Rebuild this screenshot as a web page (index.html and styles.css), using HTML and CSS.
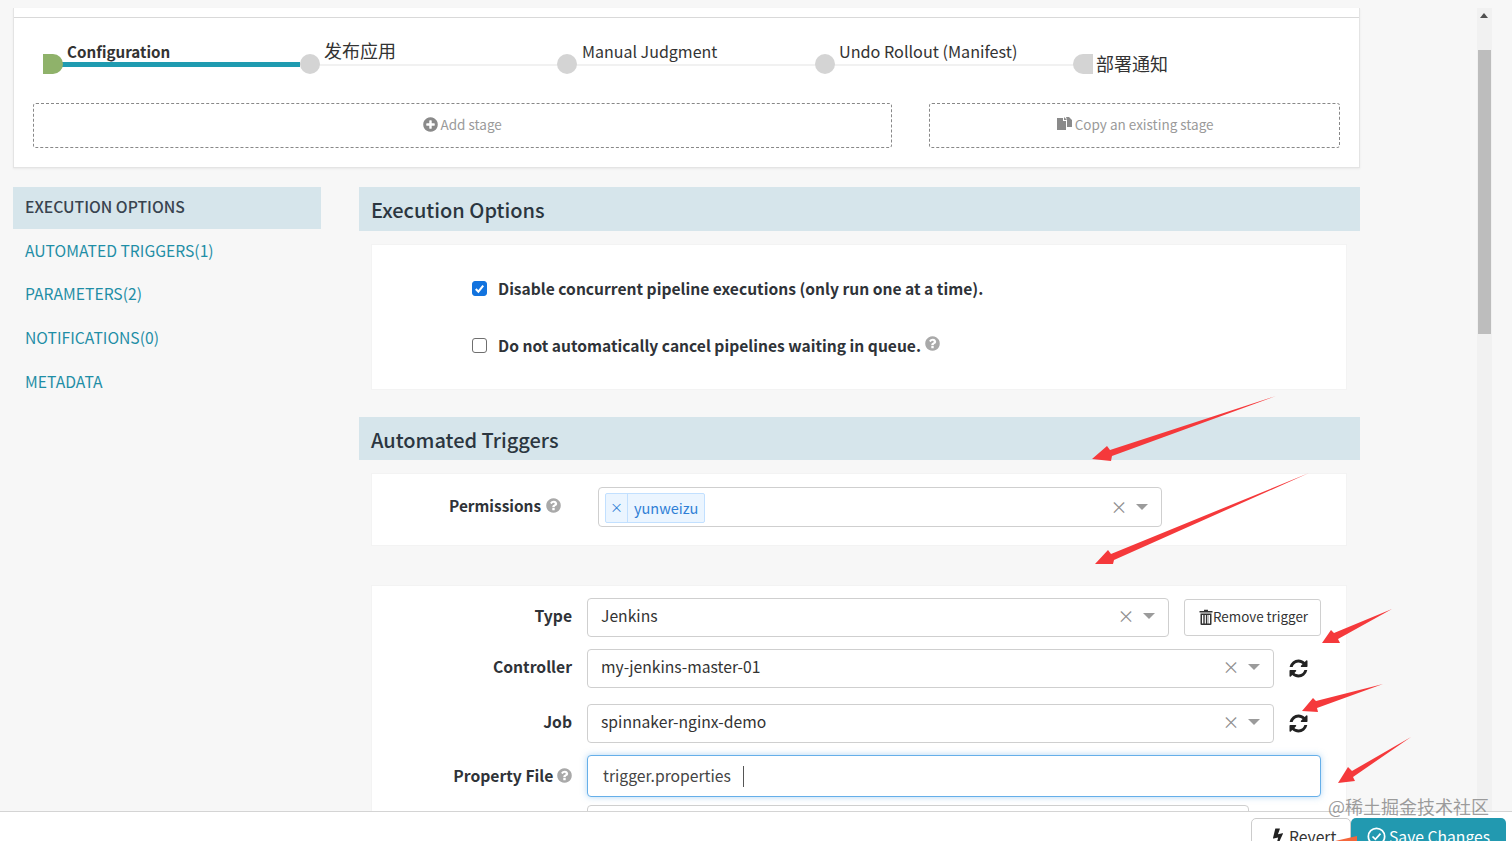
FILE: index.html
```html
<!DOCTYPE html>
<html lang="en">
<head>
<meta charset="utf-8">
<title>Pipeline configuration</title>
<link rel="stylesheet" href="styles.css">
</head>
<body>
<svg class="defs" width="0" height="0" aria-hidden="true">
  <symbol id="i-help" viewBox="0 0 1792 1792"><path d="M1024 1376v-192q0-14-9-23t-23-9h-192q-14 0-23 9t-9 23v192q0 14 9 23t23 9h192q14 0 23-9t9-23zm256-672q0-88-55.5-163t-138.5-116-170-41q-243 0-371 213-15 24 8 42l132 100q7 6 19 6 16 0 25-12 53-68 86-92 34-24 86-24 48 0 85.5 26t37.5 59q0 38-20 61t-68 45q-63 28-115.5 86.5t-52.5 125.5v36q0 14 9 23t23 9h192q14 0 23-9t9-23q0-19 21.5-49.5t54.5-49.5q32-18 49-28.5t46-35 44.5-48 28-60.5 12.5-81zm384 192q0 209-103 385.5t-279.5 279.5-385.5 103-385.5-103-279.5-279.5-103-385.5 103-385.5 279.5-279.5 385.5-103 385.5 103 279.5 279.5 103 385.5z"/></symbol>
  <symbol id="i-plus" viewBox="0 0 1792 1792"><path d="M1344 960v-128q0-26-19-45t-45-19h-256v-256q0-26-19-45t-45-19h-128q-26 0-45 19t-19 45v256h-256q-26 0-45 19t-19 45v128q0 26 19 45t45 19h256v256q0 26 19 45t45 19h128q26 0 45-19t19-45v-256h256q26 0 45-19t19-45zm320-64q0 209-103 385.5t-279.5 279.5-385.5 103-385.5-103-279.5-279.5-103-385.5 103-385.5 279.5-279.5 385.5-103 385.5 103 279.5 279.5 103 385.5z"/></symbol>
  <symbol id="i-refresh" viewBox="0 0 1792 1792"><path d="M1639 1056q0 5-1 7-64 268-268 434.5t-478 166.5q-146 0-282.5-55t-243.5-157l-129 129q-19 19-45 19t-45-19-19-45v-448q0-26 19-45t45-19h448q26 0 45 19t19 45-19 45l-137 137q71 66 161 102t187 36q134 0 250-65t186-179q11-17 53-117 8-23 30-23h192q13 0 22.5 9.5t9.5 22.5zm25-800v448q0 26-19 45t-45 19h-448q-26 0-45-19t-19-45 19-45l138-138q-148-137-349-137-134 0-250 65t-186 179q-11 17-53 117-8 23-30 23h-199q-13 0-22.5-9.5t-9.5-22.5v-7q65-268 270-434.5t480-166.5q146 0 284 55.5t245 156.5l130-129q19-19 45-19t45 19 19 45z"/></symbol>
  <symbol id="i-bolt" viewBox="0 0 1792 1792"><path d="M1333 566q18 20 7 44l-540 1157q-13 25-42 25-4 0-14-2-17-5-25.5-19t-4.5-30l197-808-406 101q-4 1-12 1-18 0-31-11-18-15-13-39l201-825q4-14 16-23t28-9h328q19 0 32 12.5t13 29.5q0 8-5 18l-171 463 396-98q8-2 12-2 19 0 34 15z"/></symbol>
</svg>

<div class="page">
  <section class="stages-card">
    <div class="stages-head"></div>
    <div class="graph">
      <span class="edge edge-active"></span>
      <span class="edge edge-rest"></span>
      <span class="node node-first"></span>
      <span class="node node-2"></span>
      <span class="node node-3"></span>
      <span class="node node-4"></span>
      <span class="node node-last"></span>
      <span class="stage-label label-1">Configuration</span>
      <span class="stage-label label-2">发布应用</span>
      <span class="stage-label label-3">Manual Judgment</span>
      <span class="stage-label label-4">Undo Rollout (Manifest)</span>
      <span class="stage-label label-5">部署通知</span>
    </div>
    <div class="stage-actions">
      <div class="dashed dashed-add">
        <svg class="ic-add"><use href="#i-plus"/></svg>
        <span>Add stage</span>
      </div>
      <div class="dashed dashed-copy">
        <svg class="ic-copy" viewBox="0 0 16 16"><path d="M0 2h6l0 3 3 0v9H0z"/><path d="M7 1l3 3H7z"/><path d="M9 1h3l3 3v7h-5V4z"/></svg>
        <span>Copy an existing stage</span>
      </div>
    </div>
  </section>

  <div class="columns">
    <nav class="side">
      <div class="side-item side-active">EXECUTION OPTIONS</div>
      <div class="side-item">AUTOMATED TRIGGERS(1)</div>
      <div class="side-item">PARAMETERS(2)</div>
      <div class="side-item">NOTIFICATIONS(0)</div>
      <div class="side-item">METADATA</div>
    </nav>

    <main class="content">
      <h2 class="sec-title">Execution Options</h2>
      <div class="panel panel-exec">
        <label class="check-row">
          <span class="box box-on"><svg viewBox="0 0 14 14"><path d="M3 7.5l2.8 3L11 4" fill="none" stroke="#fff" stroke-width="2.2"/></svg></span>
          <span>Disable concurrent pipeline executions (only run one at a time).</span>
        </label>
        <label class="check-row">
          <span class="box"></span>
          <span>Do not automatically cancel pipelines waiting in queue.</span>
          <svg class="ic-help ic-help-q"><use href="#i-help"/></svg>
        </label>
      </div>

      <h2 class="sec-title sec-title-2">Automated Triggers</h2>
      <div class="panel panel-perm">
        <div class="perm-label">Permissions <svg class="ic-help"><use href="#i-help"/></svg></div>
        <div class="select select-perm">
          <span class="tag"><span class="tag-x">×</span><span class="tag-val">yunweizu</span></span>
          <span class="sel-tools"><span class="sel-x">×</span><span class="caret"></span></span>
        </div>
      </div>

      <div class="panel panel-trigger">
        <div class="frow frow-type">
          <div class="flabel">Type</div>
          <div class="select select-type"><span>Jenkins</span><span class="sel-tools"><span class="sel-x">×</span><span class="caret"></span></span></div>
          <button class="btn-remove" type="button">
            <svg class="ic-trash" viewBox="0 0 14 16"><path d="M5 2V.7h4V2h4.5v1.6H.5V2zM1.5 4.4h11V15a1 1 0 0 1-1 1h-9a1 1 0 0 1-1-1zM3 6v8.5h1.3V6zm2.7 0v8.5h1.2V6zm2.6 0v8.5h1.2V6zM11 6H9.8v8.5H11z" fill-rule="evenodd"/></svg>Remove trigger
          </button>
        </div>
        <div class="frow frow-ctrl">
          <div class="flabel">Controller</div>
          <div class="select select-wide"><span>my-jenkins-master-01</span><span class="sel-tools"><span class="sel-x">×</span><span class="caret"></span></span></div>
          <svg class="ic-refresh"><use href="#i-refresh"/></svg>
        </div>
        <div class="frow frow-job">
          <div class="flabel">Job</div>
          <div class="select select-wide"><span>spinnaker-nginx-demo</span><span class="sel-tools"><span class="sel-x">×</span><span class="caret"></span></span></div>
          <svg class="ic-refresh"><use href="#i-refresh"/></svg>
        </div>
        <div class="frow frow-prop">
          <div class="flabel">Property File <svg class="ic-help"><use href="#i-help"/></svg></div>
          <div class="input-focus"><span>trigger.properties</span><span class="cursor"></span></div>
        </div>
        <div class="frow frow-next">
          <div class="flabel"></div>
          <div class="select select-next"></div>
        </div>
      </div>
    </main>
  </div>
</div>

<div class="scrollbar"><span class="sb-up"></span><span class="sb-thumb"></span></div>

<footer class="footer">
  <button class="btn-revert" type="button"><svg class="ic-bolt"><use href="#i-bolt"/></svg>Revert</button>
  <button class="btn-save" type="button"><svg class="ic-check" viewBox="0 0 20 20"><circle cx="10" cy="10" r="8.6" fill="none" stroke="#fff" stroke-width="1.8"/><path d="M5.8 10l3 3 5.4-6" fill="none" stroke="#fff" stroke-width="1.8"/></svg>Save Changes</button>
</footer>

<svg class="arrows" viewBox="0 0 1512 841" aria-hidden="true">
  <polygon points="1276,396 1110,450 1107,446 1092,459 1111,461 1112,456"/>
  <polygon points="1309,473 1111,554 1108,550 1095,564 1113,564 1114,560"/>
  <polygon points="1392,609 1334,633 1331,630 1322,643 1340,643 1338,639"/>
  <polygon points="1383,684 1316,701 1313,698 1302,711 1318,712 1317,708"/>
  <polygon points="1411,737 1352,771 1348,767 1338,783 1355,781 1353,777"/>
  <polygon class="arrow-orange" points="1335,841 1357,836 1357,841"/>
</svg>
<div class="watermark">@稀土掘金技术社区</div>
</body>
</html>
```
FILE: styles.css
```css
* { box-sizing: border-box; }
html, body { margin: 0; height: 100%; overflow: hidden; }
body {
  background: #f7f7f7;
  color: #2b2f36;
  font-family: "Noto Sans CJK SC", "Noto Sans", sans-serif;
  font-size: 15.7px;
  line-height: 22px;
}
.defs { position: absolute; }
.page { width: 1360px; padding: 8px 0 0 13px; }

/* stage card */
.stages-card {
  height: 160px;
  background: #fff;
  border: 1px solid #e4e4e4;
  border-top: 0;
  box-shadow: 0 1px 2px rgba(0,0,0,.06);
}
.stages-head { height: 10px; border-bottom: 1px solid #d9d9d9; }
.graph { position: relative; height: 85px; }
.edge { position: absolute; height: 2px; top: 44px; background: #f1f1f1; }
.edge-active { left: 46px; width: 240px; height: 5px; top: 44px; background: #1f9bb0; z-index: 1; }
.edge-rest { left: 300px; width: 770px; top: 46px; }
.node { position: absolute; top: 36px; width: 20px; height: 20px; border-radius: 50%; background: #d4d4d4; z-index: 2; }
.node-first { left: 29px; background: #8fb26a; border-radius: 0 10px 10px 0; }
.node-2 { left: 286px; }
.node-3 { left: 543px; }
.node-4 { left: 801px; }
.node-last { left: 1059px; border-radius: 10px 0 0 10px; }
.stage-label { position: absolute; top: 22px; white-space: nowrap; color: #333; font-size: 16px; }
.label-1 { left: 53px; font-weight: 700; font-size: 15.2px; }
.label-2 { left: 310px; font-size: 18px; top: 21px; }
.label-3 { left: 568px; }
.label-4 { left: 825px; font-size: 16.2px; }
.label-5 { left: 1082px; top: 34px; font-size: 18px; }
.stage-actions { display: flex; gap: 37px; padding: 0 19px; }
.dashed {
  height: 45px;
  border: 1px dashed #888;
  border-radius: 3px;
  display: flex;
  align-items: center;
  justify-content: center;
  color: #9a9a9a;
  font-size: 13.5px;
}
.dashed-add { width: 860px; gap: 2px; padding: 0 2px 3px 0; }
.dashed-copy { width: 411px; gap: 2px; padding: 0 0 3px 1px; }
.ic-add { width: 17px; height: 17px; fill: #8a8a8a; }
.ic-copy { width: 16px; height: 16px; fill: #8a8a8a; }

/* columns */
.columns { display: flex; gap: 38px; margin-top: 19px; }
.side { width: 308px; flex: none; }
.side-item { height: 43.6px; padding: 0 12px 2px; display: flex; align-items: center; color: #1f8ea6; }
.side-active { height: 42px; background: #d6e5eb; color: #38434f; font-weight: 500; margin-bottom: 1px; }
.content { flex: 1; min-width: 0; }
.sec-title {
  margin: 0;
  height: 44px;
  padding: 2px 12px 0;
  display: flex;
  align-items: center;
  background: #d6e5eb;
  color: #2b3640;
  font-size: 20px;
  font-weight: 500;
}
.sec-title-2 { margin-top: 27px; height: 43px; }
.panel { margin: 13px 13px 0 12px; background: #fff; border: 1px solid #f3f3f3; }
.panel-exec { height: 146px; padding: 15px 0 0 100px; }
.check-row { display: flex; align-items: center; height: 57px; font-size: 15.6px; font-weight: 700; color: #2f3338; }
.check-row:first-child { height: 56px; }
.box { width: 15px; height: 15px; flex: none; margin: 1px 11px 0 0; border: 1px solid #6f6f6f; border-radius: 3px; background: #fff; display: block; }
.box-on { background: #1273de; border-color: #1273de; }
.box-on svg { display: block; width: 13px; height: 13px; }
.ic-help { width: 17px; height: 17px; fill: #a9a9a9; flex: none; vertical-align: -2px; }
.ic-help-q { margin: -2px 0 0 3px; }

.panel-perm { height: 73px; display: flex; align-items: center; padding: 0 0 0 77px; }
.perm-label { width: 149px; font-size: 15.4px; font-weight: 700; color: #2f3338; margin-top: -10px; }
.select {
  height: 39px;
  padding: 0 13px 3px;
  border: 1px solid #cfcfcf;
  border-radius: 4px;
  background: #fff;
  display: flex;
  align-items: center;
  color: #333;
}
.select-perm { width: 564px; height: 40px; padding: 0 13px 0 6px; margin-top: -6px; }
.tag { display: flex; height: 30px; margin-top: 2px; align-items: center; border: 1px solid #c2e0ff; border-radius: 2px; background: #ebf5ff; color: #2f7fd6; font-size: 14.5px; }
.tag-x { width: 22px; height: 100%; border-right: 1px solid #c2e0ff; display: flex; align-items: center; justify-content: center; font-size: 13px; padding-bottom: 2px; }
.tag-val { padding: 0 6px; }
.sel-tools { margin-left: auto; display: flex; align-items: center; gap: 8.5px; }
.sel-x { color: #8e8e8e; font-size: 17px; line-height: 20px; }
.caret { width: 0; height: 0; border: 6.5px solid transparent; border-top: 6.5px solid #9b9b9b; border-bottom: 0; }

.panel-trigger { margin-top: 39px; height: 300px; padding-top: 12px; }
.frow { display: flex; align-items: center; }
.flabel { width: 200px; flex: none; text-align: right; font-weight: 700; color: #2f3338; margin-right: 15px; margin-top: -4px; }
.frow-ctrl { margin-top: 12px; }
.frow-job { margin-top: 16px; }
.frow-prop { margin-top: 12px; }
.frow-prop .flabel { margin-top: 0; }
.frow-prop .ic-help { margin: 0 -1px 0 -1px; }
.frow-next { margin-top: 8px; }
.select-type { width: 582px; }
.select-wide { width: 687px; }
.select-next { width: 662px; }
.btn-remove {
  margin-left: 15px;
  width: 137px;
  height: 37px;
  padding: 0 0 4px 2px;
  border: 1px solid #d0d0d0;
  border-radius: 3px;
  background: #fff;
  font: inherit;
  font-size: 13.4px;
  color: #333;
  display: flex;
  align-items: center;
  justify-content: center;
}
.ic-trash { width: 14px; height: 16px; fill: #333; margin-top: 2px; }
.ic-refresh { width: 21px; height: 21px; fill: #222; margin-left: 14px; }
.input-focus {
  width: 734px;
  height: 42px;
  padding: 0 0 0 15px;
  border: 1px solid #66afe9;
  border-radius: 4px;
  box-shadow: 0 0 6px rgba(102,175,233,.5);
  background: #fff;
  display: flex;
  align-items: center;
  color: #444;
}
.cursor { width: 1.5px; height: 21px; background: #555; margin-left: 12px; }

/* chrome */
.scrollbar { position: absolute; left: 1477px; top: 8px; bottom: 0; width: 15px; background: #f1f1f1; }
.sb-up { position: absolute; left: 3px; top: 5px; border: 4px solid transparent; border-bottom: 5px solid #505050; border-top: 0; }
.sb-thumb { position: absolute; left: 1px; top: 42px; width: 13px; height: 284px; background: #bdbdbd; }
.footer {
  position: absolute;
  left: 0; right: 0; bottom: 0;
  height: 30px;
  background: #fff;
  border-top: 1px solid #d4d4d4;
  display: flex;
  justify-content: flex-end;
  padding: 6px 6px 0 0;
  overflow: hidden;
}
.footer button { font: inherit; height: 40px; display: flex; align-items: center; border-radius: 5px 5px 0 0; }
.btn-revert { width: 100px; padding: 0 0 3px 16px; background: #fff; border: 1px solid #ccc; color: #333; }
.btn-save { width: 155px; padding: 0 0 3px 16px; background: #2299b0; border: 0; color: #fff; }
.ic-bolt { width: 20px; height: 20px; fill: #222; margin-right: 1px; }
.ic-check { width: 19px; height: 19px; margin-right: 3px; }
.arrows { position: absolute; left: 0; top: 0; width: 1512px; height: 841px; fill: #f5393b; pointer-events: none; }
.arrow-orange { fill: #f4673c; }
.watermark { position: absolute; left: 1328px; top: 795px; font-size: 18px; color: rgba(125,125,125,.75); white-space: nowrap; }
```
